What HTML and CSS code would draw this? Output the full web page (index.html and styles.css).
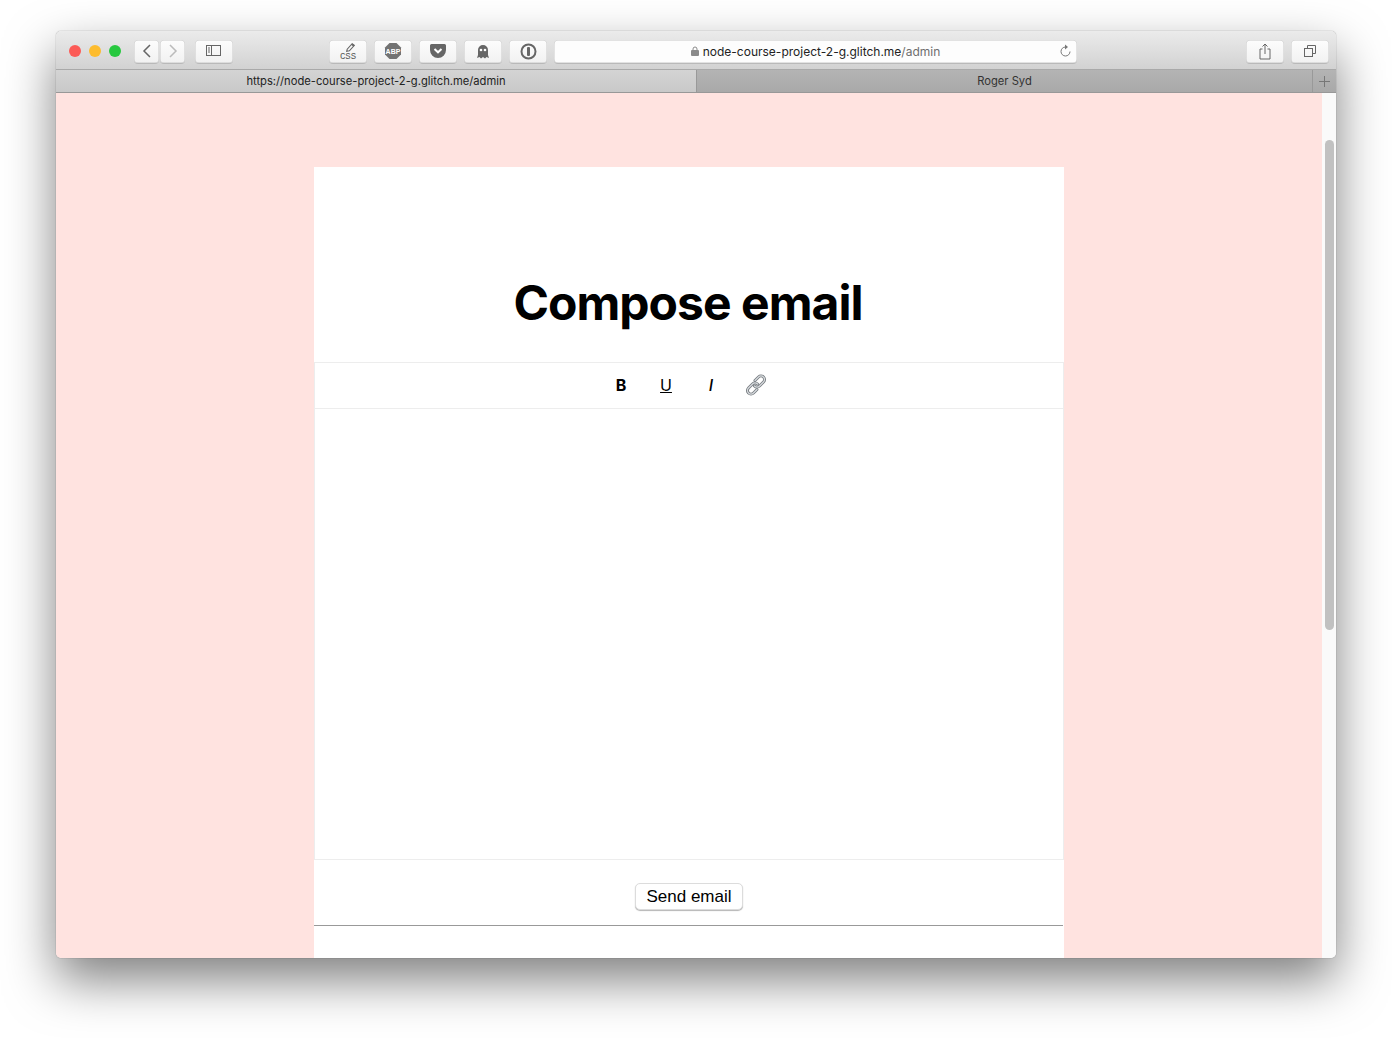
FILE: index.html
```html
<!DOCTYPE html>
<html lang="en">
<head>
  <meta charset="UTF-8" />
  <meta name="viewport" content="width=device-width, initial-scale=1" />
  <title>Compose email</title>
  <link rel="stylesheet" href="styles.css">
</head>
<body>
  <div class="window">
    <!-- Browser toolbar -->
    <div class="toolbar">
      <div class="lights">
        <span class="light red"></span>
        <span class="light yellow"></span>
        <span class="light green"></span>
      </div>
      <div class="nav-pair">
        <button class="tool-btn nav-btn">
          <svg width="10" height="16" viewBox="0 0 10 16"><path d="M8 2 2 8l6 6" fill="none" stroke="#666" stroke-width="1.5"/></svg>
        </button>
        <button class="tool-btn nav-btn">
          <svg width="10" height="16" viewBox="0 0 10 16"><path d="m2 2 6 6-6 6" fill="none" stroke="#bbb" stroke-width="1.5"/></svg>
        </button>
      </div>
      <button class="tool-btn sidebar-btn">
        <svg width="16" height="12" viewBox="0 0 16 12"><rect x=".5" y=".5" width="14" height="10" fill="none" stroke="#666"/><path d="M5.5 1v10M2 3h2M2 5h2M2 7h2" stroke="#666" fill="none"/></svg>
      </button>
      <div class="extensions">
        <button class="tool-btn ext-btn css-btn">
          <svg width="11" height="11" viewBox="0 0 10 10"><path d="M1.5 8.500 2 6.500 6.500 1.500l2 1.500L4 8Z" fill="none" stroke="#666"/><path d="M6.500 1.500l2 1.500-1 1-2-1.500Z" fill="#666"/></svg>
          <span class="css-label">CSS</span>
        </button>
        <button class="tool-btn ext-btn">
          <svg width="18" height="18" viewBox="0 0 18 18"><path d="M5.500 1h7L17 5.500v7L12.500 17h-7L1 12.500v-7Z" fill="#737373"/></svg>
          <span class="abp-label">ABP</span>
        </button>
        <button class="tool-btn ext-btn">
          <svg width="16" height="14" viewBox="0 0 16 14"><path d="M1.500 0h13A1.500 1.500 0 0 1 16 1.500V6A8 8 0 0 1 0 6V1.500A1.500 1.500 0 0 1 1.500 0Z" fill="#666"/><path d="m4.500 5 3.500 3.300L11.500 5" fill="none" stroke="#fff" stroke-width="2"/></svg>
        </button>
        <button class="tool-btn ext-btn">
          <svg width="12" height="15" viewBox="0 0 12 15"><path d="M1 6a5 5 0 0 1 10 0v5l1 3-2.500-1L8 14.500 6 13l-2 1.500L2.500 13 0 14l1-3Z" fill="#666"/><circle cx="4" cy="6" r="1.300" fill="#fff"/><circle cx="8" cy="6" r="1.300" fill="#fff"/></svg>
        </button>
        <button class="tool-btn ext-btn">
          <svg width="17" height="17" viewBox="0 0 17 17"><circle cx="8.500" cy="8.500" r="7" fill="none" stroke="#666" stroke-width="2"/><rect x="7" y="4" width="3" height="9" rx="1" fill="#666"/></svg>
        </button>
      </div>
      <div class="address-bar">
        <svg class="lock" width="8" height="10" viewBox="0 0 8 10"><path d="M2 4.500V3a2 2 0 0 1 4 0v1.500" fill="none" stroke="#8a8a8a"/><rect y="4" width="8" height="6" rx="1" fill="#8a8a8a"/></svg>
        <span class="host">node-course-project-2-g.glitch.me<span class="path">/admin</span></span>
        <svg class="reload" width="12" height="14" viewBox="0 0 12 14"><path d="M6.500 3A4.500 4.500 0 1 0 11 7.500" fill="none" stroke="#777"/><path d="M6 .5 9 3 6 5.500Z" fill="#777"/></svg>
      </div>
      <div class="window-actions">
        <button class="tool-btn action-btn">
          <svg width="12" height="17" viewBox="0 0 12 17"><path d="M3.500 6H1v10h10V6H8.500M6 11V1M3.500 3.500 6 1l2.500 2.500" fill="none" stroke="#666"/></svg>
        </button>
        <button class="tool-btn action-btn">
          <svg width="12" height="12" viewBox="0 0 12 12"><path d="M3.500 3V.5h8v8H9" fill="none" stroke="#666"/><rect x=".5" y="3.500" width="8" height="8" fill="none" stroke="#666"/></svg>
        </button>
      </div>
    </div>

    <!-- Tabs -->
    <div class="tabs">
      <div class="tab active">https://node-course-project-2-g.glitch.me/admin</div>
      <div class="tab">Roger Syd</div>
      <div class="new-tab">
        <svg width="11" height="11" viewBox="0 0 11 11"><path d="M5.500 0v11M0 5.500h11" stroke="#777" fill="none"/></svg>
      </div>
    </div>

    <!-- Page -->
    <div class="viewport">
      <main class="page">
        <div class="card">
          <h1 class="title">Compose email</h1>
          <div class="editor-bar">
            <span class="fmt fmt-bold">B</span>
            <span class="fmt fmt-under">U</span>
            <span class="fmt fmt-italic">I</span>
            <svg class="fmt-link" width="24" height="24" viewBox="0 0 24 24">
              <g fill="none" stroke-linecap="round">
                <path d="M11 7.500 14.500 4a3.500 3.500 0 0 1 5 5L15.500 13a3.500 3.500 0 0 1-5 0" stroke="#777c80" stroke-width="3"/>
                <path d="M11 7.500 14.500 4a3.500 3.500 0 0 1 5 5L15.500 13a3.500 3.500 0 0 1-5 0" stroke="#d8dcdf" stroke-width="1.200"/>
                <path d="M13 16.500 9.500 20a3.500 3.500 0 0 1-5-5L8.500 11a3.500 3.500 0 0 1 5 0" stroke="#777c80" stroke-width="3"/>
                <path d="M13 16.500 9.500 20a3.500 3.500 0 0 1-5-5L8.500 11a3.500 3.500 0 0 1 5 0" stroke="#d8dcdf" stroke-width="1.200"/>
              </g>
            </svg>
          </div>
          <div class="editor"></div>
          <div class="send-row">
            <button class="send-btn">Send email</button>
          </div>
          <hr class="divider">
        </div>
      </main>
      <div class="scrollbar">
        <div class="scroll-thumb"></div>
      </div>
    </div>
  </div>
</body>
</html>
```

FILE: styles.css
```css
* {
  margin: 0;
  padding: 0;
  box-sizing: border-box;
}

html, body {
  height: 100%;
  overflow: hidden;
}

body {
  background: #fff;
  padding: 31px 56px 0;
  font-family: 'Inter', 'Liberation Sans', sans-serif;
}

/* Window */
.window {
  height: 927px;
  border-radius: 5px;
  overflow: hidden;
  display: flex;
  flex-direction: column;
  box-shadow: 0 22px 50px rgba(0, 0, 0, 0.5), 0 0 1px rgba(0, 0, 0, 0.6);
}

.toolbar {
  height: 39px;
  flex: none;
  display: flex;
  align-items: center;
  padding: 2px 7px 0 13px;
  background: linear-gradient(#ebebeb, #d2d2d2);
  border-bottom: 1px solid #a9a9a9;
}

.lights {
  display: flex;
  gap: 8px;
  margin-right: 13px;
}

.light {
  width: 12px;
  height: 12px;
  border-radius: 50%;
}

.red { background: #fc5b57; }
.yellow { background: #fdbc2e; }
.green { background: #27c83f; }

.tool-btn {
  height: 23px;
  display: flex;
  align-items: center;
  justify-content: center;
  background: linear-gradient(#fdfdfd, #f1f1f1);
  border: none;
  border-radius: 4px;
  box-shadow: inset 0 0 0 0.5px #c8c8c8, 0 1px 0 #b9b9b9;
}

.nav-pair {
  display: flex;
  gap: 1px;
  margin-right: 10px;
}

.nav-btn { width: 25px; }

.sidebar-btn {
  width: 38px;
  margin-right: 96px;
}

.extensions {
  display: flex;
  gap: 7px;
  margin-right: 7px;
}

.ext-btn {
  width: 38px;
  position: relative;
}

.css-btn {
  flex-direction: column;
  gap: 0;
}

.css-btn svg {
  margin-left: 5px;
}

.css-label {
  font-size: 9px;
  line-height: 8px;
  color: #555;
  letter-spacing: 0;
  font-family: 'Liberation Mono', monospace;
}

.abp-label {
  position: absolute;
  top: 7px;
  left: 0;
  right: 0;
  text-align: center;
  font-family: 'Liberation Sans', sans-serif;
  font-size: 7px;
  line-height: 9px;
  font-weight: 700;
  color: #fff;
}

.address-bar {
  width: 523px;
  height: 23px;
  margin-right: 169px;
  position: relative;
  display: flex;
  align-items: center;
  justify-content: center;
  gap: 4px;
  background: #fdfdfd;
  border-radius: 4px;
  box-shadow: inset 0 0 0 0.5px #c8c8c8, 0 1px 0 #b9b9b9;
  font-size: 12px;
  color: #222;
}

.path { color: #6e6e6e; }

.reload {
  position: absolute;
  right: 6px;
  top: 4px;
}

.window-actions {
  display: flex;
  gap: 7px;
}

.action-btn { width: 38px; }

/* Tabs */
.tabs {
  height: 23px;
  flex: none;
  display: flex;
  border-bottom: 1px solid #989898;
  background: linear-gradient(#b4b4b4, #a9a9a9);
  font-size: 11.200px;
  color: #333;
}

.tab {
  flex: 1;
  display: flex;
  align-items: center;
  justify-content: center;
  padding-bottom: 1px;
}

.tab.active {
  flex: none;
  width: 641px;
  background: linear-gradient(#d4d4d4, #c9c9c9);
  border-right: 1px solid #999;
  color: #222;
}

.new-tab {
  width: 24px;
  display: flex;
  align-items: center;
  justify-content: center;
  border-left: 1px solid #999;
}

/* Page */
.viewport {
  flex: 1;
  min-height: 0;
  display: flex;
  overflow: hidden;
}

.page {
  flex: 1;
  background: #ffe3e0;
  padding-top: 74px;
  display: flex;
  justify-content: center;
  overflow: hidden;
}

.card {
  width: 750px;
  height: 900px;
  flex: none;
  background: #fff;
}

.title {
  height: 195px;
  padding: 107px 2px 0 0;
  text-align: center;
  font-size: 48px;
  line-height: 58px;
  font-weight: 700;
  letter-spacing: -0.95px;
  color: #000;
}

.editor-bar {
  height: 47px;
  display: flex;
  align-items: center;
  justify-content: center;
  border: 1px solid #ededed;
  padding: 0 12px 2px 0;
  color: #000;
}

.fmt {
  width: 45px;
  text-align: center;
  font-size: 16px;
}

.fmt-bold { font-weight: 700; }
.fmt-under { text-decoration: underline; }
.fmt-italic { font-style: italic; font-weight: 500; }

.fmt-link {
  margin-left: 10px;
}

.editor {
  height: 451px;
  border-left: 1px solid #ededed;
  border-right: 1px solid #ededed;
  border-bottom: 1px solid #ededed;
  background: #fff;
}

.send-row {
  height: 65px;
  display: flex;
  justify-content: center;
  padding-top: 23px;
}

.send-btn {
  width: 108px;
  height: 27px;
  background: #fff;
  border: 1px solid #dcdcdc;
  border-radius: 5px;
  box-shadow: 0 1px 1px #b5b5b5;
  font-family: 'Liberation Sans', sans-serif;
  font-size: 17px;
  color: #000;
}

.divider {
  border: none;
  border-top: 1px solid #999;
  margin-right: 1px;
}

/* Scrollbar */
.scrollbar {
  width: 14px;
  flex: none;
  background: #fafafa;
  padding: 47px 2px 0 3px;
}

.scroll-thumb {
  height: 490px;
  background: #c1c1c1;
  border-radius: 5px;
}
```
